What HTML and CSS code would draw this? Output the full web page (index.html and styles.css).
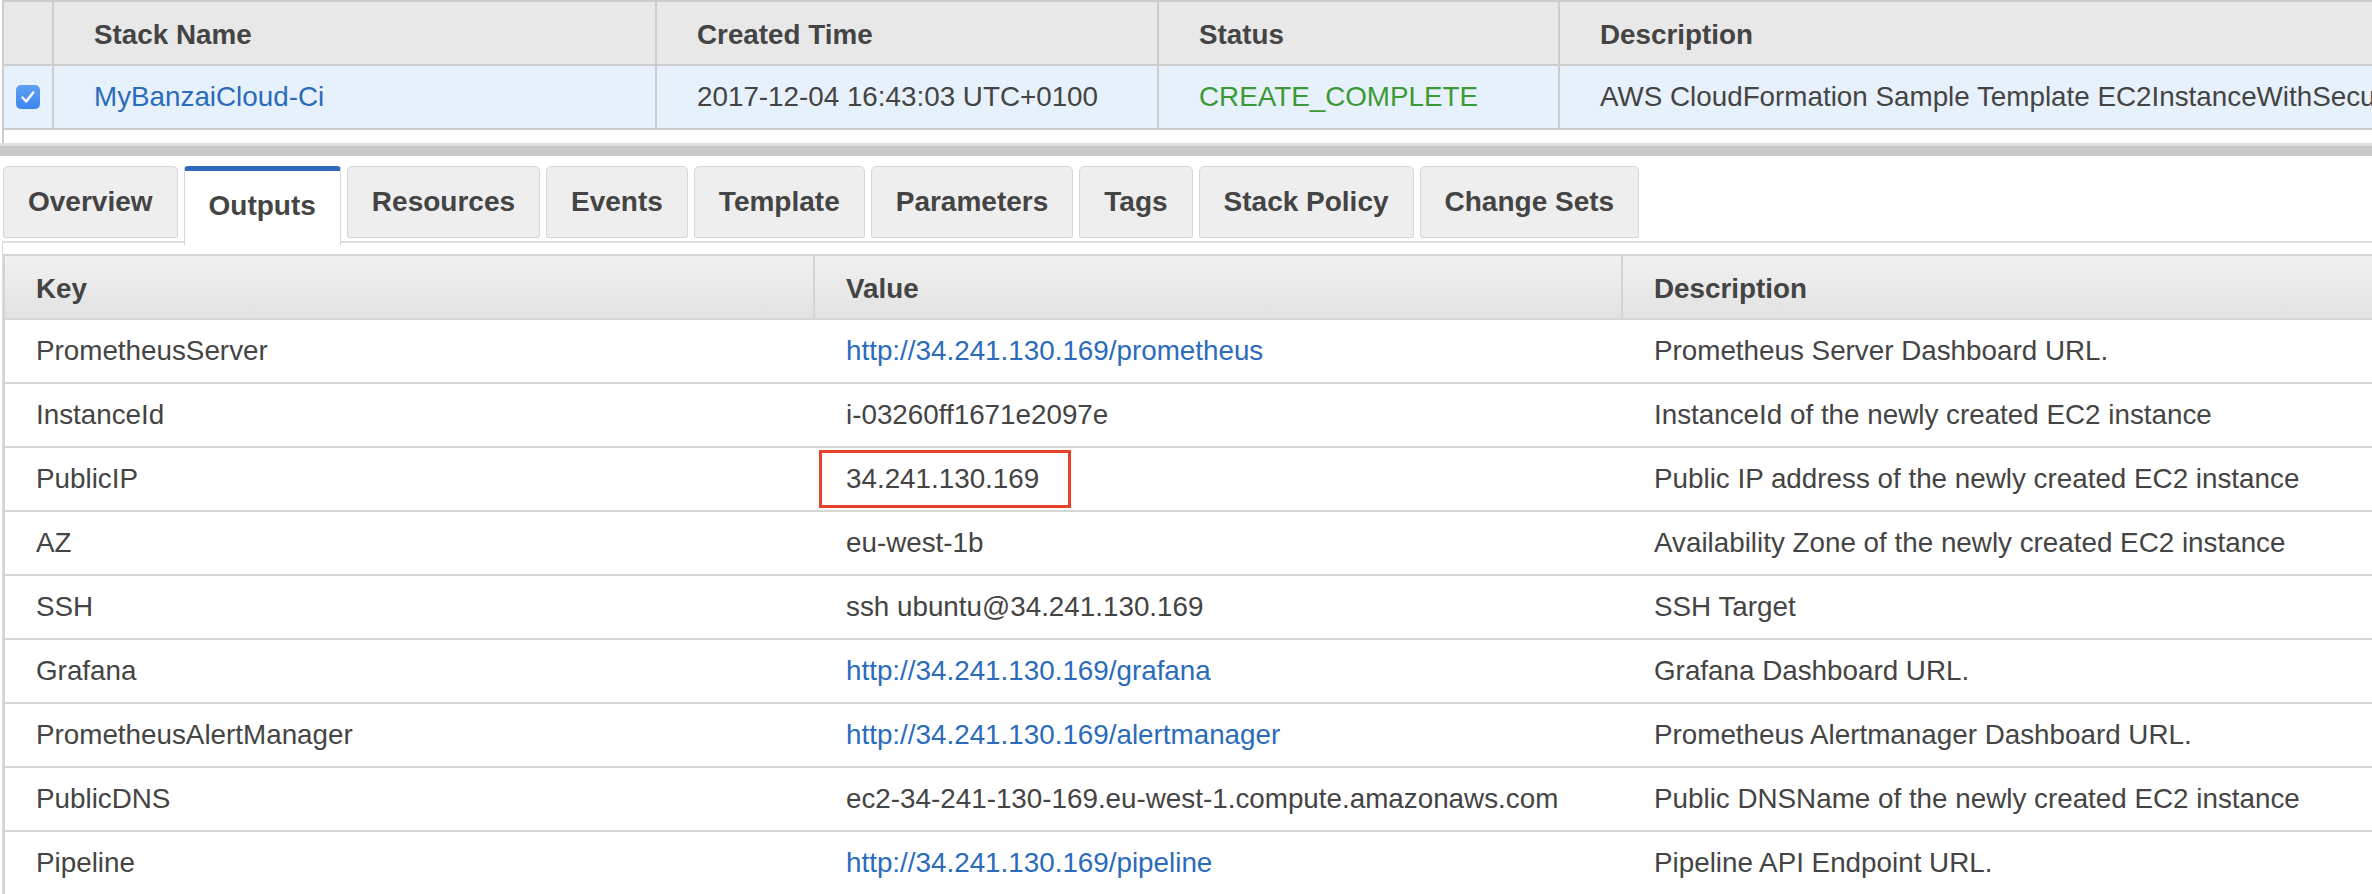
FILE: index.html
```html
<!DOCTYPE html>
<html lang="en">
<head>
<meta charset="utf-8">
<title>CloudFormation Stack Outputs</title>
<link rel="stylesheet" href="styles.css">
</head>
<body>
<div class="stack-panel">
  <div class="stack-grid">
    <div class="cell head check-col"></div>
    <div class="cell head">Stack Name</div>
    <div class="cell head">Created Time</div>
    <div class="cell head">Status</div>
    <div class="cell head">Description</div>
    <div class="cell sel check-col">
      <span class="checkbox"><svg width="24" height="24" viewBox="0 0 24 24"><polyline points="6.5,12.5 10.2,16.5 17.2,7.5" fill="none" stroke="#fff" stroke-width="2.4" stroke-linecap="round" stroke-linejoin="round"/></svg></span>
    </div>
    <div class="cell sel"><a class="link" href="#">MyBanzaiCloud-Ci</a></div>
    <div class="cell sel">2017-12-04 16:43:03 UTC+0100</div>
    <div class="cell sel status-ok">CREATE_COMPLETE</div>
    <div class="cell sel">AWS CloudFormation Sample Template EC2InstanceWithSecurityGroupSample: Create an Amazon EC2 instance</div>
  </div>
</div>
<div class="splitter"></div>
<nav class="tabs">
  <div class="tab">Overview</div>
  <div class="tab active">Outputs</div>
  <div class="tab">Resources</div>
  <div class="tab">Events</div>
  <div class="tab">Template</div>
  <div class="tab">Parameters</div>
  <div class="tab">Tags</div>
  <div class="tab">Stack Policy</div>
  <div class="tab">Change Sets</div>
</nav>
<section class="tab-content">
  <div class="outputs-grid">
    <div class="ocell ohead">Key</div>
    <div class="ocell ohead">Value</div>
    <div class="ocell ohead">Description</div>

    <div class="ocell">PrometheusServer</div>
    <div class="ocell"><a class="link" href="#">http://34.241.130.169/prometheus</a></div>
    <div class="ocell">Prometheus Server Dashboard URL.</div>

    <div class="ocell">InstanceId</div>
    <div class="ocell">i-03260ff1671e2097e</div>
    <div class="ocell">InstanceId of the newly created EC2 instance</div>

    <div class="ocell">PublicIP</div>
    <div class="ocell"><span class="highlight">34.241.130.169</span></div>
    <div class="ocell">Public IP address of the newly created EC2 instance</div>

    <div class="ocell">AZ</div>
    <div class="ocell">eu-west-1b</div>
    <div class="ocell">Availability Zone of the newly created EC2 instance</div>

    <div class="ocell">SSH</div>
    <div class="ocell">ssh ubuntu@34.241.130.169</div>
    <div class="ocell">SSH Target</div>

    <div class="ocell">Grafana</div>
    <div class="ocell"><a class="link" href="#">http://34.241.130.169/grafana</a></div>
    <div class="ocell">Grafana Dashboard URL.</div>

    <div class="ocell">PrometheusAlertManager</div>
    <div class="ocell"><a class="link" href="#">http://34.241.130.169/alertmanager</a></div>
    <div class="ocell">Prometheus Alertmanager Dashboard URL.</div>

    <div class="ocell">PublicDNS</div>
    <div class="ocell">ec2-34-241-130-169.eu-west-1.compute.amazonaws.com</div>
    <div class="ocell">Public DNSName of the newly created EC2 instance</div>

    <div class="ocell">Pipeline</div>
    <div class="ocell"><a class="link" href="#">http://34.241.130.169/pipeline</a></div>
    <div class="ocell">Pipeline API Endpoint URL.</div>
  </div>
</section>
</body>
</html>
```

FILE: styles.css
```css
html, body {
  margin: 0;
  padding: 0;
  background: #ffffff;
}

body {
  width: 2372px;
  height: 894px;
  overflow: hidden;
  font-family: "Liberation Sans", Arial, sans-serif;
  font-size: 27.8px;
  color: #444444;
}

.link {
  color: #2b6bbb;
  text-decoration: none;
}

/* ---------- stack list ---------- */
.stack-panel {
  margin-left: 2px;
  border-left: 2px solid #cccccc;
  padding-bottom: 13px;
  overflow: hidden;
}

.stack-grid {
  display: grid;
  grid-template-columns: 50px 603px 502px 401px 1400px;
  width: max-content;
  border-top: 2px solid #cccccc;
}

.cell {
  box-sizing: border-box;
  height: 64px;
  padding-left: 40px;
  border-right: 2px solid #cccccc;
  border-bottom: 2px solid #cccccc;
  display: flex;
  align-items: center;
  white-space: nowrap;
  overflow: hidden;
}

.cell.head {
  background: #e8e8e8;
  font-weight: bold;
  padding-top: 3px;
}

.cell.sel {
  background: #e7f1fc;
}

.cell.check-col {
  padding: 0;
  justify-content: center;
}

.checkbox {
  width: 24px;
  height: 24px;
  border-radius: 5px;
  background: linear-gradient(#5fa0f4, #3d86ee);
  display: flex;
}

.status-ok {
  color: #3b9a36;
}

/* ---------- splitter ---------- */
.splitter {
  height: 10px;
  border-top: 3px solid #dfdfdf;
  background: #c9c9c9;
}

/* ---------- tabs ---------- */
.tabs {
  display: flex;
  align-items: flex-start;
  gap: 6px;
  height: 72px;
  margin-top: 10px;
  padding-left: 3px;
}

.tab {
  box-sizing: border-box;
  height: 72px;
  padding: 0 24px;
  border: 1px solid #d6d6d6;
  border-radius: 5px 5px 2px 2px;
  background: #eeeeee;
  font-weight: bold;
  font-size: 28px;
  line-height: 70px;
  white-space: nowrap;
  color: #444444;
}

.tab.active {
  position: relative;
  z-index: 1;
  height: 79px;
  background: #ffffff;
  border-top: 5px solid #2f6bbd;
  border-bottom: none;
  border-radius: 4px 4px 0 0;
}

/* ---------- outputs ---------- */
.tab-content {
  margin-top: 3px;
  margin-left: 2px;
  border-top: 2px solid #dddddd;
  border-left: 1px solid #dddddd;
  padding-top: 11px;
}

.outputs-grid {
  display: grid;
  grid-template-columns: 810px 808px 1200px;
  width: max-content;
  border-top: 2px solid #d4d4d4;
  border-left: 2px solid #d4d4d4;
}

.ocell {
  box-sizing: border-box;
  height: 64px;
  padding-left: 31px;
  border-bottom: 2px solid #d6d6d6;
  display: flex;
  align-items: center;
  white-space: nowrap;
}

.ocell.ohead {
  background: linear-gradient(#f1f1f1, #e2e2e2);
  border-right: 2px solid #d4d4d4;
  font-weight: bold;
  padding-top: 4px;
}

.highlight {
  display: inline-block;
  box-sizing: border-box;
  height: 58px;
  line-height: 52px;
  padding: 0 29px 0 24px;
  margin-left: -27px;
  border: 3px solid #e8402a;
}
```
